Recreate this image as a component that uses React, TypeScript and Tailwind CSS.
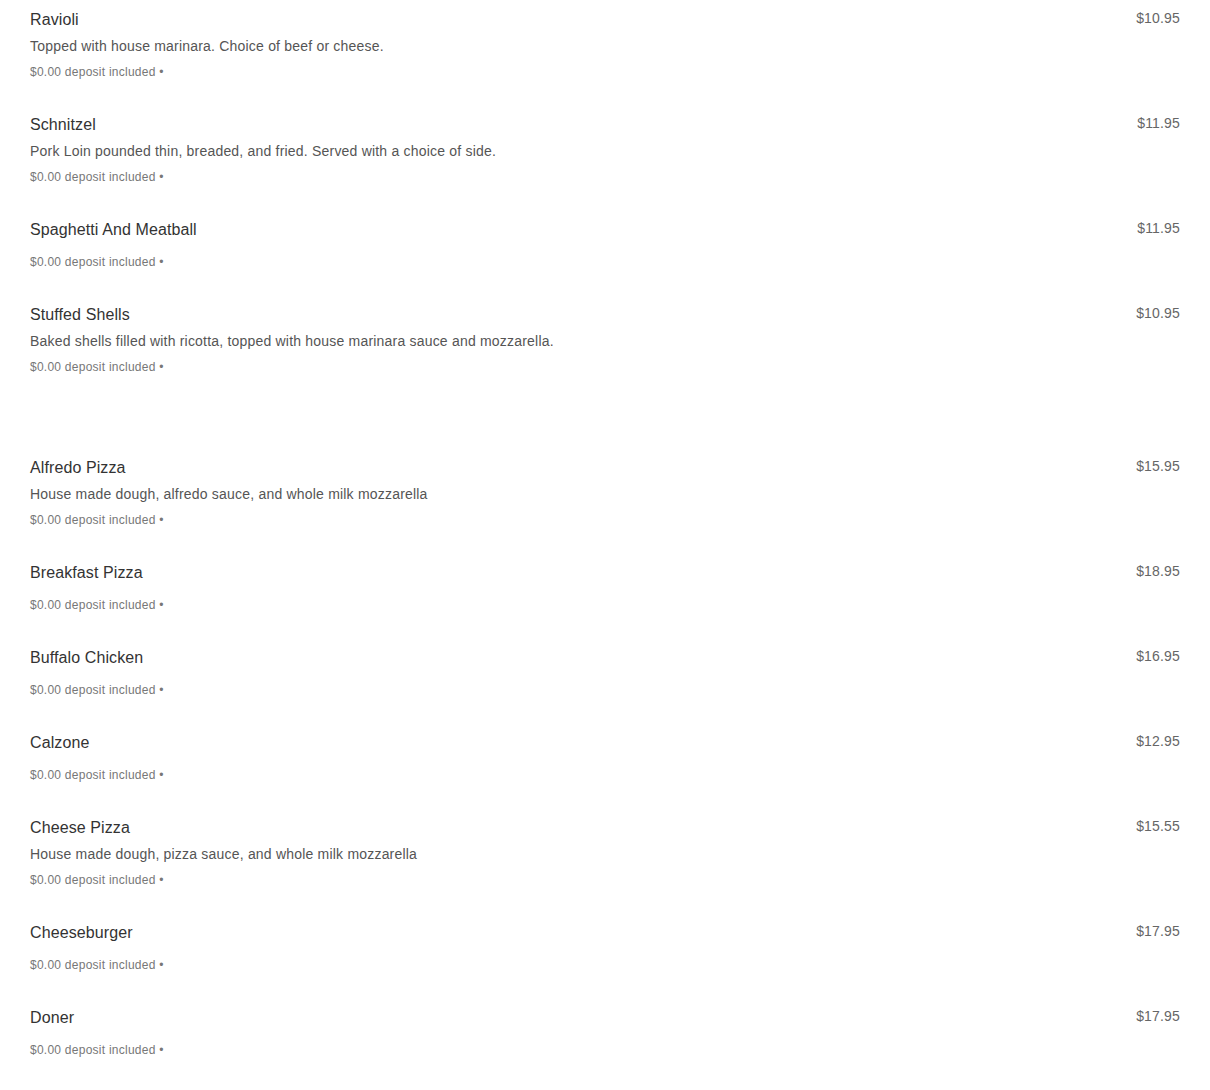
import React from "react";

type Item = { name: string; desc?: string; price: string };

const sections: Item[][] = [
  [
    { name: "Ravioli", desc: "Topped with house marinara. Choice of beef or cheese.", price: "$10.95" },
    { name: "Schnitzel", desc: "Pork Loin pounded thin, breaded, and fried. Served with a choice of side.", price: "$11.95" },
    { name: "Spaghetti And Meatball", price: "$11.95" },
    { name: "Stuffed Shells", desc: "Baked shells filled with ricotta, topped with house marinara sauce and mozzarella.", price: "$10.95" },
  ],
  [
    { name: "Alfredo Pizza", desc: "House made dough, alfredo sauce, and whole milk mozzarella", price: "$15.95" },
    { name: "Breakfast Pizza", price: "$18.95" },
    { name: "Buffalo Chicken", price: "$16.95" },
    { name: "Calzone", price: "$12.95" },
    { name: "Cheese Pizza", desc: "House made dough, pizza sauce, and whole milk mozzarella", price: "$15.55" },
    { name: "Cheeseburger", price: "$17.95" },
    { name: "Doner", price: "$17.95" },
  ],
];

function Row({ item }: { item: Item }) {
  return (
    <div className="flex justify-between pt-[9px] pb-[25px]">
      <div className="flex flex-col">
        <div className="text-[16px] leading-[22px] tracking-[0.1px] text-[#333333]">{item.name}</div>
        <div className="mt-[5px] text-[14px] leading-[20px] tracking-[0.2px] text-[#555555]">{item.desc}</div>
        <div className="mt-2 text-[12px] leading-[16px] tracking-[0.25px] text-[#777777]">$0.00 deposit included •</div>
      </div>
      <div className="text-[14px] leading-[18px] tracking-[0.17px] text-[#666666]">{item.price}</div>
    </div>
  );
}

export default function App() {
  return (
    <div className="min-h-[1090px] bg-white px-[30px] font-['Liberation_Sans',Arial,Helvetica,sans-serif]">
      <div className="flex flex-col gap-[48px]">
        {sections.map((s, i) => (
          <div key={i} className="flex flex-col">
            {s.map((it) => (
              <Row key={it.name} item={it} />
            ))}
          </div>
        ))}
      </div>
    </div>
  );
}
